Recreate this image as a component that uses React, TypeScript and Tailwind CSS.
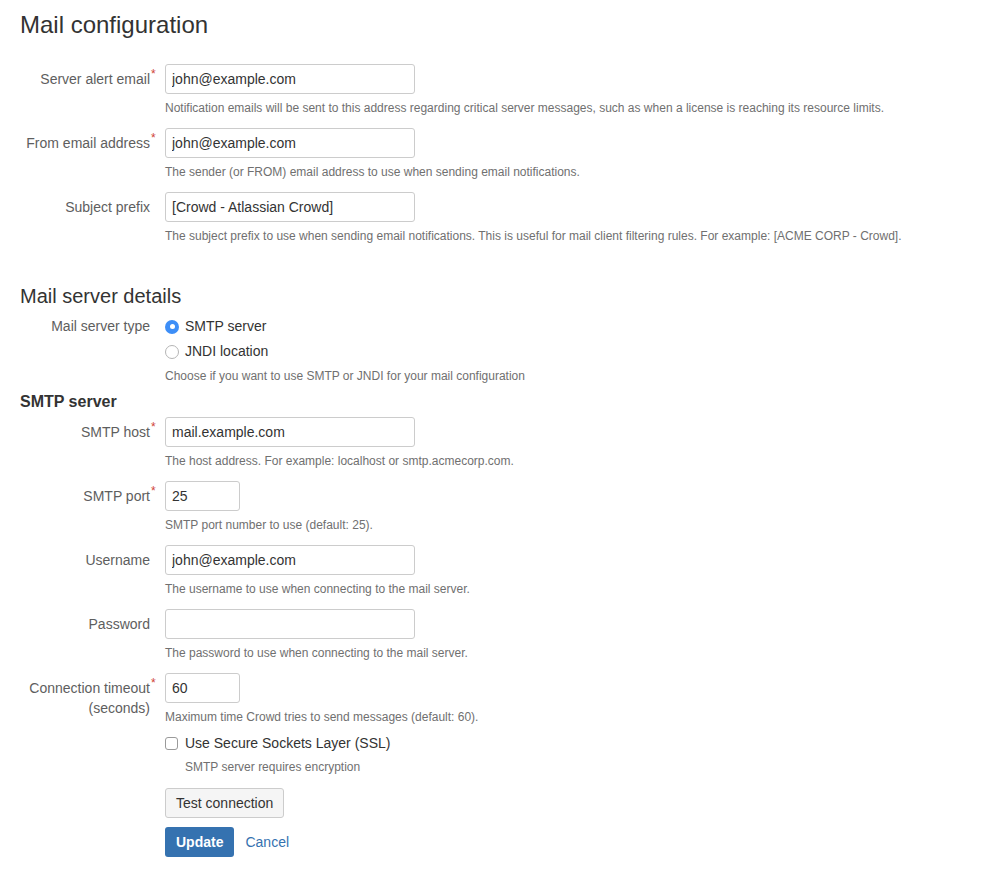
import React from 'react';

interface FieldProps {
  label: React.ReactNode;
  required?: boolean;
  value: string;
  help: string;
  short?: boolean;
}

const Label: React.FC<{ text: string; required?: boolean }> = ({ text, required }) => (
  <span className="relative">
    {text}
    {required && (
      <span className="absolute left-full top-[-3px] ml-[1px] text-[12px] leading-[12px] text-[#d04437]">*</span>
    )}
  </span>
);

const Field: React.FC<FieldProps> = ({ label, value, help, short }) => (
  <div className="flex pb-[12px]">
    <div className="w-[130px] shrink-0 text-right pt-[5px] text-[14px] leading-[20px] text-[#5e5e5e]">{label}</div>
    <div className="ml-[15px]">
      <input
        type="text"
        defaultValue={value}
        className={`${short ? 'w-[75px]' : 'w-[250px]'} h-[30px] border border-[#cccccc] rounded-[3px] px-[6px] text-[14px] text-[#333] bg-white outline-none`}
      />
      <div className="mt-[6px] text-[12px] leading-[16px] text-[#707070]">{help}</div>
    </div>
  </div>
);

const Radio: React.FC<{ checked?: boolean; label: string }> = ({ checked, label }) => (
  <div className="flex items-center h-[25px]">
    {checked ? (
      <span className="w-[14px] h-[14px] rounded-full bg-[#3d8ef7] flex items-center justify-center">
        <span className="w-[5px] h-[5px] rounded-full bg-white" />
      </span>
    ) : (
      <span className="w-[14px] h-[14px] rounded-full border border-[#b5b5b5] bg-white" />
    )}
    <span className="ml-[6px] text-[14px] text-[#333]">{label}</span>
  </div>
);

export default function App() {
  return (
    <div className="min-h-screen bg-white px-[20px] pt-[12px] pb-[20px] font-['Liberation_Sans',Arial,sans-serif] text-[#333]">
      <h1 className="text-[24px] leading-[26px] font-normal text-[#333] mb-[26px]">Mail configuration</h1>

      <Field
        label={<Label text="Server alert email" required />}
        value="john@example.com"
        help="Notification emails will be sent to this address regarding critical server messages, such as when a license is reaching its resource limits."
      />
      <Field
        label={<Label text="From email address" required />}
        value="john@example.com"
        help="The sender (or FROM) email address to use when sending email notifications."
      />
      <Field
        label={<Label text="Subject prefix" />}
        value="[Crowd - Atlassian Crowd]"
        help="The subject prefix to use when sending email notifications. This is useful for mail client filtering rules. For example: [ACME CORP - Crowd]."
      />

      <h2 className="mt-[28px] text-[20px] leading-[24px] font-normal text-[#333]">Mail server details</h2>

      <div className="flex mt-[6px]">
        <div className="w-[130px] shrink-0 text-right text-[14px] leading-[25px] text-[#5e5e5e]">Mail server type</div>
        <div className="ml-[15px]">
          <Radio checked label="SMTP server" />
          <Radio label="JNDI location" />
          <div className="mt-[4px] text-[12px] leading-[16px] text-[#707070]">Choose if you want to use SMTP or JNDI for your mail configuration</div>
        </div>
      </div>

      <h3 className="mt-[8px] mb-[5px] text-[16px] leading-[20px] font-bold text-[#333]">SMTP server</h3>

      <Field
        label={<Label text="SMTP host" required />}
        value="mail.example.com"
        help="The host address. For example: localhost or smtp.acmecorp.com."
      />
      <Field
        label={<Label text="SMTP port" required />}
        value="25"
        short
        help="SMTP port number to use (default: 25)."
      />
      <Field
        label={<Label text="Username" />}
        value="john@example.com"
        help="The username to use when connecting to the mail server."
      />
      <Field
        label={<Label text="Password" />}
        value=""
        help="The password to use when connecting to the mail server."
      />

      <div className="flex">
        <div className="w-[130px] shrink-0 text-right pt-[5px] text-[14px] leading-[20px] text-[#5e5e5e]">
          <Label text="Connection timeout" required />
          <br />
          (seconds)
        </div>
        <div className="ml-[15px]">
          <input
            type="text"
            defaultValue="60"
            className="w-[75px] h-[30px] border border-[#cccccc] rounded-[3px] px-[6px] text-[14px] text-[#333] bg-white outline-none"
          />
          <div className="mt-[6px] text-[12px] leading-[16px] text-[#707070]">Maximum time Crowd tries to send messages (default: 60).</div>

          <div className="mt-[8px] flex items-center h-[20px]">
            <span className="w-[13px] h-[13px] rounded-[3px] border border-[#9a9a9a] bg-white" />
            <span className="ml-[7px] text-[14px] text-[#333]">Use Secure Sockets Layer (SSL)</span>
          </div>
          <div className="mt-[6px] ml-[20px] text-[12px] leading-[16px] text-[#707070]">SMTP server requires encryption</div>

          <button className="mt-[13px] h-[30px] px-[10px] bg-[#f5f5f5] border border-[#cccccc] rounded-[3px] text-[14px] text-[#333] block">
            Test connection
          </button>

          <div className="mt-[9px] flex items-center">
            <button className="h-[30px] px-[11px] bg-[#3572b0] rounded-[3px] text-[14px] font-bold text-white">Update</button>
            <a href="#" className="ml-[11px] text-[14px] text-[#3572b0]">Cancel</a>
          </div>
        </div>
      </div>
    </div>
  );
}
